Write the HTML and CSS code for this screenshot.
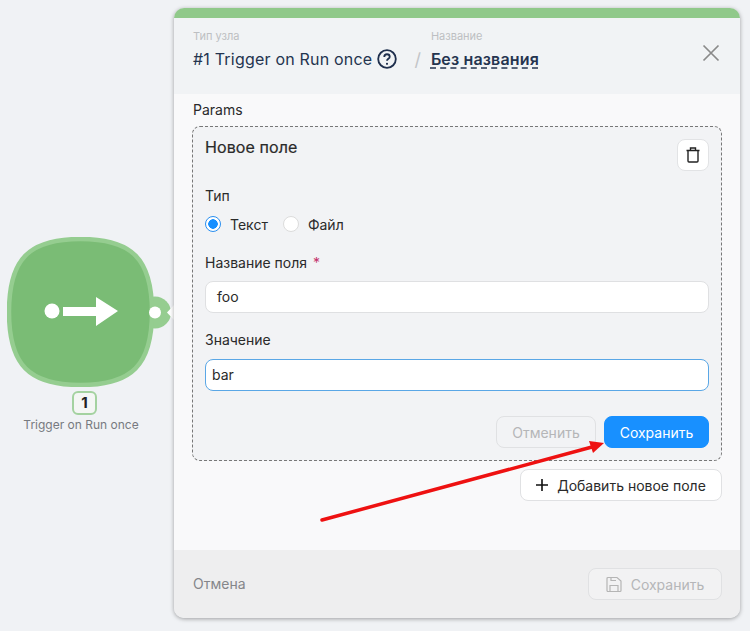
FILE: index.html
```html
<!DOCTYPE html>
<html lang="en">
<head>
    <meta charset="UTF-8">
    <title>Trigger on Run once</title>
    <link rel="stylesheet" href="styles.css">
</head>
<body>
    <div class="canvas">
        <div class="node">
            <svg class="node-shape" width="172" height="150" viewBox="0 0 172 150">
                <circle class="port-ring" cx="148" cy="75.500" r="16"/>
                <path class="blob" d="M73.500 2C125 2 145 22 145 75C145 128 125 148 73.500 148C22 148 2 128 2 75C2 22 22 2 73.500 2Z"/>
                <circle class="white" cx="45" cy="74" r="7.500"/>
                <path class="white" d="M56 70h33v-10l22 14l-22 15v-10h-33z"/>
                <circle class="white" cx="148" cy="75.500" r="6"/>
                <path class="white" d="M160 75.500l7-7.500v15z"/>
            </svg>
            <div class="node-num">1</div>
            <div class="node-name">Trigger on Run once</div>
        </div>
    </div>

    <div class="panel">
        <div class="panel-top"></div>
        <div class="panel-head">
            <div class="head-col">
                <div class="head-label">Тип узла</div>
                <div class="head-title">
                    #1 Trigger on Run once
                    <svg class="help" width="20" height="20" viewBox="0 0 22 22">
                        <circle cx="11" cy="11" r="9.700" fill="none" stroke="#1f2f4d" stroke-width="2"/>
                        <path d="M8 8.700c0-1.800 1.300-2.900 3-2.900s3 1.100 3 2.700c0 2.300-3 2.300-3 4.500" fill="none" stroke="#1f2f4d" stroke-width="2"/>
                        <circle cx="11" cy="16.300" r="1.200" fill="#1f2f4d"/>
                    </svg>
                </div>
            </div>
            <div class="head-slash">/</div>
            <div class="head-col">
                <div class="head-label">Название</div>
                <div class="head-name">Без названия</div>
            </div>
            <svg class="close" width="18" height="18" viewBox="0 0 18 18">
                <path d="M1.500 1.500l15 15M16.500 1.500l-15 15" stroke="#8a8a8a" stroke-width="1.700" fill="none"/>
            </svg>
        </div>

        <div class="panel-body">
            <div class="params-label">Params</div>
            <div class="field-card">
                <div class="card-head">
                    <div class="card-title">Новое поле</div>
                    <button class="icon-btn" type="button">
                        <svg width="16" height="18" viewBox="0 0 16 18">
                            <path d="M1.500 4.500h13M5.500 4.500v-2.500h5v2.500M3 4.500v10.500a1 1 0 0 0 1 1h8a1 1 0 0 0 1-1v-10.500" fill="none" stroke="#222" stroke-width="1.400"/>
                        </svg>
                    </button>
                </div>
                <div class="field-label">Тип</div>
                <div class="radios">
                    <span class="radio radio-on"></span><span class="radio-text">Текст</span>
                    <span class="radio"></span><span class="radio-text">Файл</span>
                </div>
                <div class="field-label">Название поля <span class="req">*</span></div>
                <div class="input">foo</div>
                <div class="field-label value-label">Значение</div>
                <div class="input input-focus">bar</div>
                <div class="card-actions">
                    <button class="btn btn-disabled" type="button">Отменить</button>
                    <button class="btn btn-primary" type="button">Сохранить</button>
                </div>
            </div>
            <div class="add-row">
                <button class="btn btn-add" type="button">
                    <svg width="12" height="12" viewBox="0 0 12 12"><path d="M6 0v12M0 6h12" stroke="#111" stroke-width="1.600"/></svg>
                    Добавить новое поле
                </button>
            </div>
        </div>

        <div class="panel-foot">
            <div class="foot-cancel">Отмена</div>
            <button class="btn btn-save" type="button">
                <svg width="16" height="17" viewBox="0 0 16 17">
                    <path d="M1 2.500a1 1 0 0 1 1-1h9l4 3.500v9.500a1 1 0 0 1-1 1h-12a1 1 0 0 1-1-1z M4 15.500v-6h8v6 M5 1.500v3h5" fill="none" stroke="#b5b5b5" stroke-width="1.200"/>
                </svg>
                Сохранить
            </button>
        </div>
    </div>

    <svg class="arrow" width="750" height="631" viewBox="0 0 750 631">
        <path d="M322 520L592 447" stroke="#ee1111" stroke-width="3.500" stroke-linecap="round"/>
        <path d="M604 443L589 441L593 453Z" fill="#ee1111"/>
    </svg>
</body>
</html>
```

FILE: styles.css
```css
body {
    margin: 0;
    height: 631px;
    overflow: hidden;
    display: flex;
    background-color: #f0f2f5;
    font-family: Inter, "Noto Sans", sans-serif;
    font-size: 14px;
    color: #2a2a2a;
}

button {
    font-family: inherit;
}

.canvas {
    width: 174px;
    flex-shrink: 0;
    padding-top: 237px;
    box-sizing: border-box;
}

.node {
    display: flex;
    flex-direction: column;
    align-items: center;
    width: 162px;
}

.node-shape {
    display: block;
    align-self: flex-start;
    margin-left: 7px;
}

.blob {
    fill: #7abc75;
    stroke: #95cd90;
    stroke-width: 4.500;
}

.port-ring {
    fill: #95cd90;
}

.white {
    fill: #fff;
}

.node-num {
    width: 21px;
    height: 20px;
    margin-top: 4px;
    margin-left: 7px;
    border: 2px solid #a4d2a0;
    border-radius: 6px;
    background-color: #f4f6f4;
    font-size: 15px;
    font-weight: 700;
    line-height: 20px;
    text-align: center;
    color: #222;
}

.node-name {
    margin-top: 2px;
    font-size: 12px;
    line-height: 16px;
    color: #777a80;
}

.panel {
    width: 566px;
    height: 610px;
    margin-top: 8px;
    display: flex;
    flex-direction: column;
    border-radius: 10px;
    overflow: hidden;
    box-shadow: 0 1px 4px rgba(0, 0, 0, 0.35);
}

.panel-top {
    height: 10px;
    background-color: #90c98a;
}

.panel-head {
    height: 76px;
    padding: 11px 20px 0 19px;
    box-sizing: border-box;
    display: flex;
    background-color: #f1f3f5;
}

.head-label {
    font-size: 11px;
    line-height: 14px;
    color: #bdbfc2;
}

.head-title,
.head-name {
    margin-top: 5px;
    font-size: 16px;
    line-height: 22px;
    color: #24344f;
}

.head-title {
    display: flex;
    align-items: center;
    gap: 5px;
    letter-spacing: 0.2px;
}

.head-name {
    font-weight: 600;
    letter-spacing: 0.15px;
    text-decoration: underline dashed;
    text-underline-offset: 3px;
}

.head-slash {
    margin: 20px 10px 0 17px;
    font-size: 18px;
    line-height: 22px;
    color: #c3c5c8;
}

.close {
    margin-left: auto;
    margin-top: 15px;
}

.panel-body {
    flex: 1;
    padding: 7px 18px 0 18px;
    background-color: #f9f9fa;
}

.params-label {
    line-height: 17px;
    margin-bottom: 8px;
    margin-left: 1px;
}

.field-card {
    height: 335px;
    padding: 12px;
    box-sizing: border-box;
    border: 1px dashed #777;
    border-radius: 8px;
    background-color: #f2f3f5;
}

.card-head {
    display: flex;
    justify-content: space-between;
    align-items: flex-start;
    height: 48px;
}

.card-title {
    font-size: 16px;
    font-weight: 400;
    letter-spacing: 0.1px;
    line-height: 17px;
    -webkit-text-stroke: 0.2px #2a2a2a;
}

.icon-btn {
    width: 32px;
    height: 32px;
    padding: 0;
    display: flex;
    align-items: center;
    justify-content: center;
    background-color: #fff;
    border: 1px solid #e2e3e5;
    border-radius: 8px;
}

.field-label {
    height: 17px;
    line-height: 17px;
    margin-bottom: 10px;
}

.value-label {
    margin-bottom: 11px;
}

.req {
    margin-left: 2px;
    color: #c4326b;
}

.radios {
    display: flex;
    align-items: center;
    height: 20px;
    margin-top: 1px;
    margin-bottom: 20px;
}

.radio {
    width: 14px;
    height: 14px;
    border: 1px solid #dcdcdc;
    border-radius: 50%;
    background-color: #fff;
}

.radio-on {
    border-color: #2a8ff0;
    background: radial-gradient(circle, #1890ff 0 4.500px, #fff 5px);
}

.radio-text {
    margin: 0 15px 0 9px;
}

.input {
    height: 30px;
    padding: 0 11px;
    margin-bottom: 18px;
    border: 1px solid #dfe0e2;
    border-radius: 8px;
    background-color: #fff;
    line-height: 30px;
}

.input-focus {
    padding: 0 6px;
    border-color: #5aa7e6;
    margin-bottom: 25px;
}

.card-actions {
    display: flex;
    justify-content: flex-end;
    gap: 8px;
}

.btn {
    height: 32px;
    box-sizing: border-box;
    padding: 0;
    border-radius: 8px;
    border: 1px solid #e0e1e3;
    background-color: transparent;
    font-size: 14px;
    display: flex;
    align-items: center;
    justify-content: center;
}

.btn-disabled {
    width: 100px;
    color: #b5b6b8;
}

.btn-primary {
    width: 105px;
    border-color: #1890ff;
    background-color: #1890ff;
    color: #fff;
}

.add-row {
    display: flex;
    justify-content: flex-end;
    margin-top: 8px;
}

.btn-add {
    width: 202px;
    gap: 9px;
    background-color: #fff;
    color: #2a2a2a;
}

.panel-foot {
    height: 68px;
    padding: 0 18px 0 19px;
    display: flex;
    align-items: center;
    justify-content: space-between;
    background-color: #eeeeef;
}

.foot-cancel {
    padding-bottom: 2px;
    color: #85868a;
}

.btn-save {
    width: 134px;
    gap: 9px;
    color: #b5b6b8;
    background-color: #f2f2f3;
}

/* annotation drawn over the screenshot */
.arrow {
    position: absolute;
    left: 0;
    top: 0;
    pointer-events: none;
}
```
